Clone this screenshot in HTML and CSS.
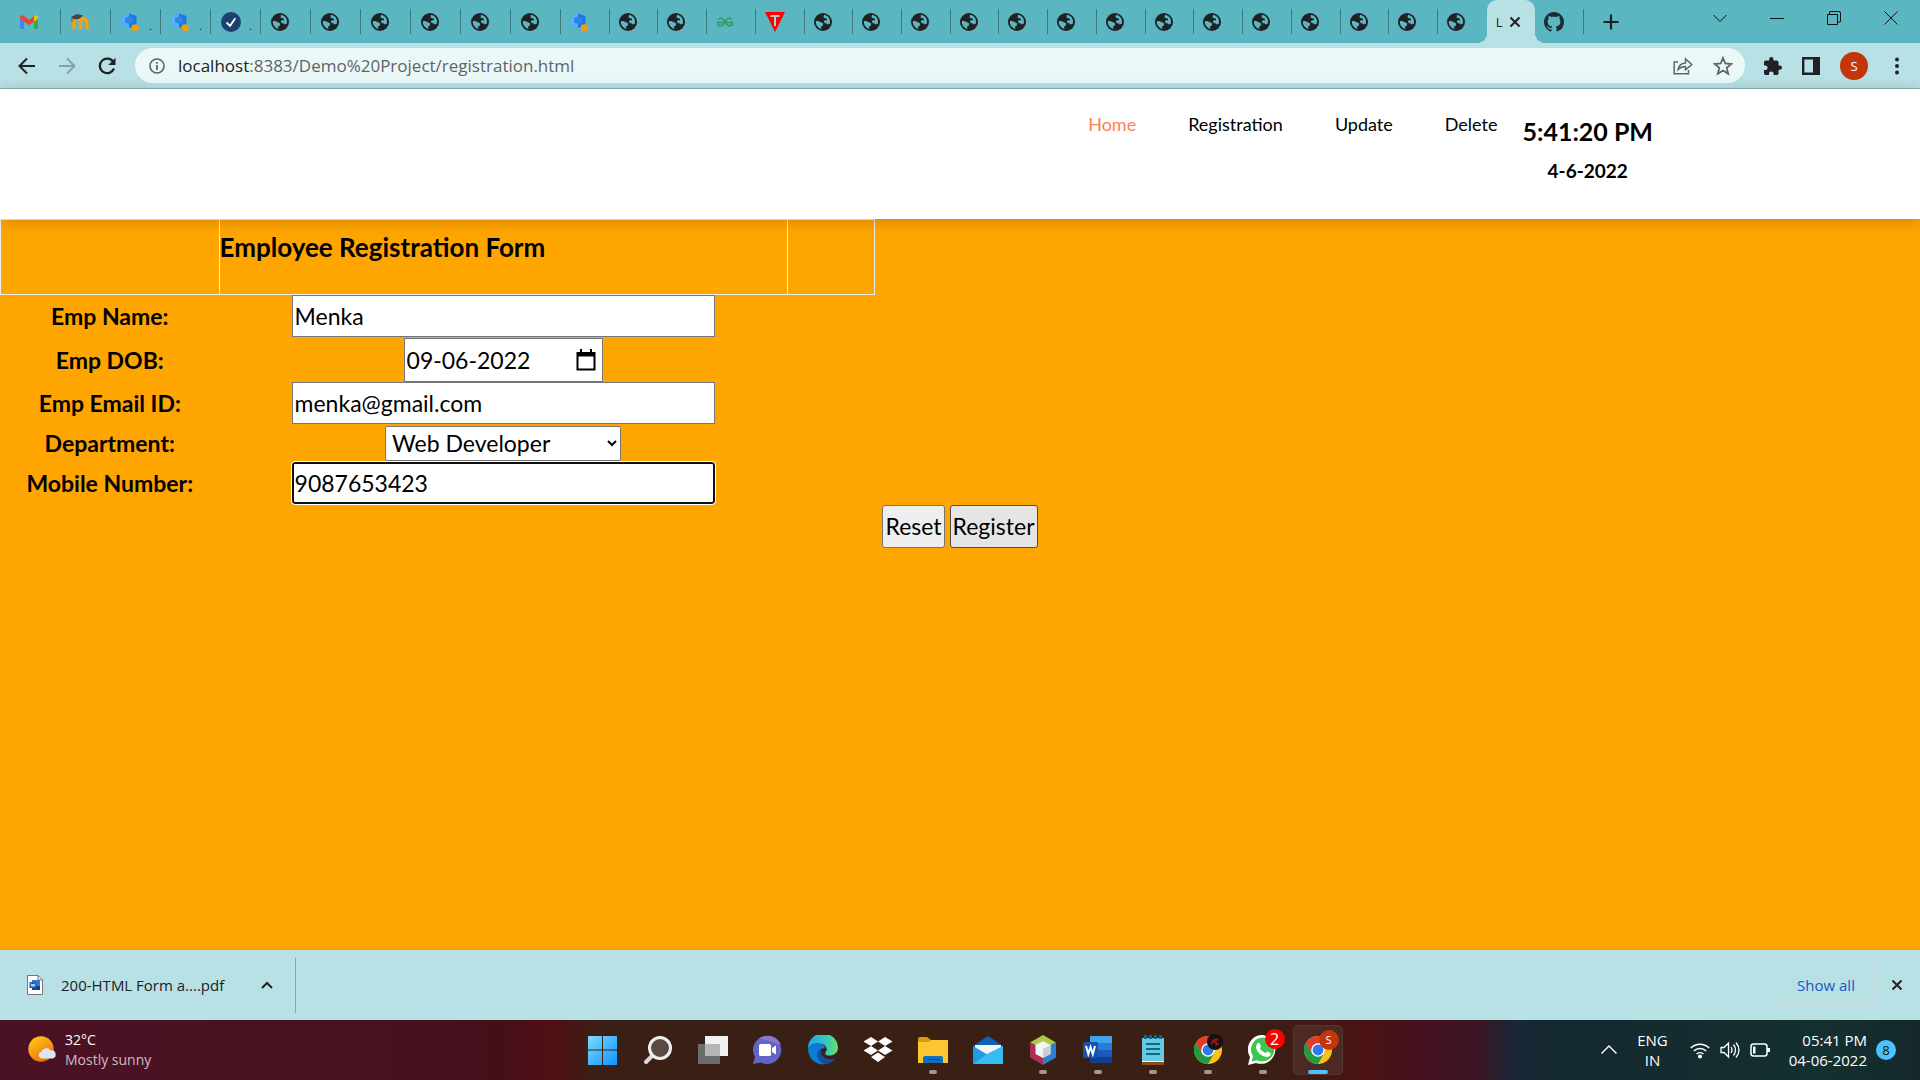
FILE: index.html
```html
<!DOCTYPE html>
<html lang="en">
<head>
<meta charset="utf-8">
<title>Registration</title>
<link rel="stylesheet" href="styles.css">
</head>
<body>
<svg class="defs" aria-hidden="true">
  <symbol id="globe" viewBox="0 0 18 18"><circle cx="9" cy="9" r="9" fill="#202124"/><path d="M10 1.800A7.200 7.200 0 0 1 16 10.500L13.500 11.500 12.500 10.200H10.800L9.800 8.600 11 7.200H13V5.800L11.200 5.300 9.500 4.500Z" fill="#5ab7c1"/><path d="M1.900 8H4L7.200 9.200 9.200 10.500 8.800 12.800 7 13.500 7.500 16A7.200 7.200 0 0 1 1.900 8Z" fill="#5ab7c1"/></symbol>
  <symbol id="cube" viewBox="0 0 18 18"><path d="M1 3.500 8 .5 15.500 3V12L8 15 1 12.500Z" fill="#1a7be0"/><path d="M1 3.500 8 .5V15L1 12.500Z" fill="#55b1fb"/><path d="M4 5 8 3.500 12 5V9.500L8 11 4 9.500Z" fill="#2f86e8"/><rect x="11" y="11.500" width="6.500" height="6.300" rx="1.500" fill="#f90"/></symbol>
  <symbol id="x" viewBox="0 0 12 12"><path d="M1.500 1.500 10.500 10.500M10.500 1.500 1.500 10.500" fill="none" stroke="currentColor" stroke-width="2"/></symbol>
  <symbol id="chrome" viewBox="0 0 28 28"><circle cx="14" cy="14" r="14" fill="#fbc116"/><path d="M14 14 1.900 7A14 14 0 0 1 26.100 7H14Z" fill="#e33b2e"/><path d="M1.900 7A14 14 0 0 0 14 28L20 17.500 14 14 8 17.500Z" fill="#229a47"/><path d="M1.900 7 8 17.500 14 14 14 7Z" fill="#e33b2e"/><path d="M1.900 7A14 14 0 0 0 .5 18L8 17.500Z" fill="#229a47"/><circle cx="14" cy="14" r="6.800" fill="#fff"/><circle cx="14" cy="14" r="5.400" fill="#2e7ceb"/></symbol>
</svg>

<div class="screen">
  <header class="tabstrip">
    <nav class="tabs" aria-label="Tabs">
      <div class="tab first"><svg viewBox="0 0 18 14" class="fav"><path d="M0 2V12.500Q0 14 1.500 14H4V6.500Z" fill="#4285f4"/><path d="M18 2V12.500Q18 14 16.500 14H14V6.500Z" fill="#34a853"/><path d="M0 2.500Q.5-.8 3.500.8L9 5 14.500.8 14 6.500 9 10.200 4 6.500 0 4Z" fill="#ea4335"/><path d="M14 1.200Q17.500-1 18 2.500V4L14 6.800Z" fill="#fbbc04"/></svg></div>
      <div class="tab wide"><svg viewBox="0 0 18 18" class="fav"><path d="M3 16.500V9Q3 6 6 6T9.500 9V16.500M9.500 9Q9.500 6 12.500 6T16 9V16.500" fill="none" stroke="#f7a01b" stroke-width="3.400"/><path d="M0 4 6 1 12 2.500 8 6 3.500 6.500Z" fill="#444"/><path d="M1 4V9" stroke="#555"/></svg></div>
      <div class="tab wide"><svg class="fav"><use href="#cube"/></svg><i class="cut">.</i></div>
      <div class="tab wide"><svg class="fav"><use href="#cube"/></svg><i class="cut">.</i></div>
      <div class="tab wide"><svg viewBox="0 0 20 20" class="fav big"><circle cx="10" cy="10" r="10" fill="#1b416f"/><path d="M5.500 10.500 9 13.800 14.300 6.300" fill="none" stroke="#fff" stroke-width="1.800"/></svg><i class="cut">.</i></div>
      <div class="tab wide"><svg class="fav"><use href="#globe"/></svg></div>
      <div class="tab wide"><svg class="fav"><use href="#globe"/></svg></div>
      <div class="tab wide"><svg class="fav"><use href="#globe"/></svg></div>
      <div class="tab wide"><svg class="fav"><use href="#globe"/></svg></div>
      <div class="tab wide"><svg class="fav"><use href="#globe"/></svg></div>
      <div class="tab wide"><svg class="fav"><use href="#globe"/></svg></div>
      <div class="tab"><svg class="fav"><use href="#cube"/></svg></div>
      <div class="tab"><svg class="fav"><use href="#globe"/></svg></div>
      <div class="tab"><svg class="fav"><use href="#globe"/></svg></div>
      <div class="tab"><svg viewBox="0 0 18 18" class="fav"><path d="M1 9.500H17M2 6.500Q5 4 7.500 6.500 8.500 8 8 10 7 13 4 12.800 1.500 12.500 1.500 9.500M16 6.500Q13 4 10.500 6.500 9.500 8 10 10 11 13 14 12.800 16.500 12.500 16.500 9.500" fill="none" stroke="#2f9a62" stroke-width="1.600"/></svg></div>
      <div class="tab"><svg viewBox="0 0 20 20" class="fav big"><path d="M0 0H20L10 20Z" fill="#f00"/><path d="M5.500 4H14.500M10 4V14" stroke="#bcc" stroke-width="2"/></svg></div>
      <div class="tab"><svg class="fav"><use href="#globe"/></svg></div>
      <div class="tab"><svg class="fav"><use href="#globe"/></svg></div>
      <div class="tab"><svg class="fav"><use href="#globe"/></svg></div>
      <div class="tab"><svg class="fav"><use href="#globe"/></svg></div>
      <div class="tab"><svg class="fav"><use href="#globe"/></svg></div>
      <div class="tab"><svg class="fav"><use href="#globe"/></svg></div>
      <div class="tab"><svg class="fav"><use href="#globe"/></svg></div>
      <div class="tab"><svg class="fav"><use href="#globe"/></svg></div>
      <div class="tab"><svg class="fav"><use href="#globe"/></svg></div>
      <div class="tab"><svg class="fav"><use href="#globe"/></svg></div>
      <div class="tab"><svg class="fav"><use href="#globe"/></svg></div>
      <div class="tab"><svg class="fav"><use href="#globe"/></svg></div>
      <div class="tab"><svg class="fav"><use href="#globe"/></svg></div>
      <div class="tab plain"><svg class="fav"><use href="#globe"/></svg></div>
      <div class="tab active"><span class="tab-title">L</span><button class="icon-btn" aria-label="Close tab"><svg class="x"><use href="#x"/></svg></button></div>
      <div class="tab"><svg viewBox="0 0 16 16" class="fav big"><path fill="#202a35" d="M8 0C3.580 0 0 3.580 0 8c0 3.540 2.290 6.530 5.470 7.590.4.070.55-.17.55-.38 0-.19-.01-.82-.01-1.490-2.010.37-2.530-.49-2.690-.94-.09-.23-.48-.94-.82-1.130-.28-.15-.68-.52-.01-.53.630-.01 1.080.58 1.230.82.720 1.210 1.870.87 2.330.66.070-.52.280-.87.510-1.070-1.780-.2-3.640-.89-3.640-3.950 0-.87.310-1.590.820-2.150-.08-.2-.36-1.020.08-2.120 0 0 .67-.21 2.200.82.640-.18 1.320-.27 2-.27s1.360.09 2 .27c1.530-1.040 2.200-.82 2.200-.82.440 1.100.160 1.920.080 2.120.510.560.820 1.270.820 2.150 0 3.070-1.870 3.750-3.650 3.950.290.250.540.730.540 1.480 0 1.070-.01 1.930-.01 2.200 0 .21.150.460.550.380A8.010 8.010 0 0 0 16 8c0-4.420-3.580-8-8-8Z"/></svg></div>
    </nav>
    <button class="icon-btn new-tab" aria-label="New tab"><svg viewBox="0 0 16 16" class="i16"><path d="M8 .5V15.500M.5 8H15.500" stroke="#202124" stroke-width="2.200"/></svg></button>
    <div class="window-controls">
      <button class="icon-btn" aria-label="Search tabs"><svg viewBox="0 0 14 14" class="i14"><path d="M.5 4 7 10.500 13.500 4"/></svg></button>
      <button class="icon-btn" aria-label="Minimize"><svg viewBox="0 0 14 14" class="i14"><path d="M0 7.500H14"/></svg></button>
      <button class="icon-btn" aria-label="Restore"><svg viewBox="0 0 14 14" class="i14"><path d="M.5 3.500H10.500V13.500H.5ZM2.500 3V1Q2.500.5 3 .5H12Q13.500.5 13.500 2V10.500Q13.500 11 13 11H11"/></svg></button>
      <button class="icon-btn" aria-label="Close"><svg viewBox="0 0 14 14" class="i14"><path d="M.5.5 13.500 13.500M13.500.5.5 13.500"/></svg></button>
    </div>
  </header>

  <div class="toolbar">
    <div class="nav-buttons">
      <button class="icon-btn" aria-label="Back"><svg viewBox="0 0 18 18" class="i18"><path d="M17 9H2M9 1.500 1.500 9 9 16.500" fill="none" stroke="#202124" stroke-width="2"/></svg></button>
      <button class="icon-btn" aria-label="Forward"><svg viewBox="0 0 18 18" class="i18"><path d="M1 9H16M9 1.500 16.500 9 9 16.500" fill="none" stroke="#84a2a6" stroke-width="2"/></svg></button>
      <button class="icon-btn" aria-label="Reload"><svg viewBox="0 0 18 18" class="i18"><path d="M15.500 5.200A7.300 7.300 0 1 0 16 11.500" fill="none" stroke="#202124" stroke-width="2.200"/><path d="M17.500.8V8H10.300Z" fill="#202124"/></svg></button>
    </div>
    <div class="omnibox">
      <svg viewBox="0 0 18 18" class="i16"><circle cx="9" cy="9" r="7.900" fill="none" stroke="#5f6368" stroke-width="1.800"/><path d="M9 8V13.500M9 4.500V6.500" stroke="#5f6368" stroke-width="2"/></svg>
      <div class="url"><b>localhost</b>:8383/Demo%20Project/registration.html</div>
      <button class="icon-btn" aria-label="Share"><svg viewBox="0 0 20 18" class="i20"><path d="M5 5H1.200V16.800H15.500V13M5 12.500Q6 6.500 12.500 6V2L18.800 7.500 12.500 12.800V9.500Q8 9.500 5 12.500Z" fill="none" stroke="#5f6368" stroke-width="1.500"/></svg></button>
      <button class="icon-btn" aria-label="Bookmark"><svg viewBox="0 0 20 20" class="i20"><path d="M10 2 12.300 7.500 18.300 8 13.700 11.900 15.200 17.800 10 14.600 4.800 17.800 6.300 11.900 1.700 8 7.700 7.500Z" fill="none" stroke="#5f6368" stroke-width="1.800"/></svg></button>
    </div>
    <div class="tools">
      <button class="icon-btn" aria-label="Extensions"><svg viewBox="2 1 21 21" class="i18"><path fill="#202124" d="M20.500 11H19V7a2 2 0 0 0-2-2h-4V3.500a2.500 2.500 0 0 0-5 0V5H4a2 2 0 0 0-2 2v3.800h1.500a2.700 2.700 0 0 1 0 5.400H2V20a2 2 0 0 0 2 2h3.800v-1.500a2.700 2.700 0 0 1 5.400 0V22H17a2 2 0 0 0 2-2v-4h1.500a2.500 2.500 0 0 0 0-5Z"/></svg></button>
      <button class="icon-btn" aria-label="Side panel"><svg viewBox="0 0 18 18" class="i18"><path d="M1.200 1.200H16.800V16.800H1.200Z" fill="none" stroke="#202124" stroke-width="2.400"/><path d="M11 1H17V17H11Z" fill="#202124"/></svg></button>
      <button class="icon-btn avatar" aria-label="Profile">S</button>
      <button class="icon-btn" aria-label="Menu"><svg viewBox="0 0 18 18" class="i18"><g fill="#202124"><circle cx="9" cy="2.500" r="2"/><circle cx="9" cy="9" r="2"/><circle cx="9" cy="15.500" r="2"/></g></svg></button>
    </div>
  </div>

  <main class="page">
    <div class="site-header">
      <nav class="menu" aria-label="Site">
        <a href="#home" class="current">Home</a>
        <a href="#registration">Registration</a>
        <a href="#update">Update</a>
        <a href="#delete">Delete</a>
      </nav>
      <div class="clock"><h2>5:41:20 PM</h2><h3>4-6-2022</h3></div>
    </div>
    <form class="form">
      <table>
        <colgroup><col class="c-label"><col class="c-field"><col class="c-end"></colgroup>
        <thead><tr><th></th><th><h1>Employee Registration Form</h1></th><th></th></tr></thead>
        <tbody>
          <tr><td><label for="name">Emp Name:</label></td><td><input class="field" id="name" type="text" value="Menka"></td></tr>
          <tr class="dob"><td><label for="dob">Emp DOB:</label></td><td><span class="date"><input id="dob" type="text" value="09-06-2022"><svg viewBox="0 0 20 22" class="cal"><path d="M1.500 4H18.500V20.500H1.500Z" fill="none" stroke="#000" stroke-width="2"/><path d="M1 3H19V7.500H1ZM4 0H6V4H4ZM14 0H16V4H14Z"/></svg></span></td></tr>
          <tr><td><label for="email">Emp Email ID:</label></td><td><input class="field" id="email" type="email" value="menka@gmail.com"></td></tr>
          <tr class="dept"><td><label for="dept">Department:</label></td><td><select id="dept"><option>Web Developer</option></select></td></tr>
          <tr><td><label for="mobile">Mobile Number:</label></td><td><input class="field focused" id="mobile" type="text" value="9087653423"></td></tr>
        </tbody>
      </table>
      <div class="actions"><button type="reset">Reset</button><button type="submit" class="hover">Register</button></div>
    </form>
  </main>

  <div class="downloads">
    <div class="download">
      <svg viewBox="0 0 16 20" class="doc"><path d="M.5.500H11L15.500 5V19.500H.5Z" fill="#fff" stroke="#777"/><path d="M11 .5V5H15.500" fill="none" stroke="#777"/><rect x="5" y="5" width="8" height="10" fill="#2b7cd3"/><path d="M5 11H13V15H5Z" fill="#103f91"/><rect x="2.500" y="7" width="7" height="6" fill="#185abd"/><path d="M4 8.500 5 11.500 6 9 7 11.500 8 8.500" fill="none" stroke="#fff" stroke-width=".8"/></svg>
      <span>200-HTML Form a....pdf</span>
      <button class="icon-btn" aria-label="More"><svg viewBox="0 0 12 8" class="x"><path d="M1 7 6 2 11 7" fill="none" stroke="#202124" stroke-width="2"/></svg></button>
    </div>
    <button class="show-all">Show all</button>
    <button class="icon-btn" aria-label="Close downloads"><svg class="x"><use href="#x"/></svg></button>
  </div>

  <footer class="taskbar">
    <div class="weather">
      <svg viewBox="0 0 28 28" class="sun"><defs><linearGradient id="sg" x1="0" y1="0" x2=".6" y2="1"><stop offset="0" stop-color="#ffd31a"/><stop offset="1" stop-color="#f07008"/></linearGradient></defs><circle cx="13" cy="13" r="12.700" fill="url(#sg)"/><path d="M13 22.500A3.700 3.700 0 0 1 13.500 15.500 5 5 0 0 1 22.500 14.500 4 4 0 0 1 24.500 22.500Z" fill="#dbe6f7"/></svg>
      <div>32°C<br><span>Mostly sunny</span></div>
    </div>
    <div class="apps">
      <button class="app" aria-label="Start"><svg viewBox="0 0 30 30"><defs><linearGradient id="wg" x1="0" y1="0" x2="1" y2="1"><stop offset="0" stop-color="#7adcff"/><stop offset="1" stop-color="#1292fb"/></linearGradient></defs><path d="M0 1H14V14.500H0ZM15 1H29V14.500H15ZM0 15.500H14V30H0ZM15 15.500H29V30H15Z" fill="url(#wg)"/></svg></button>
      <button class="app" aria-label="Search"><svg viewBox="0 0 30 30"><path d="M11 19 3 27" stroke="#d5d9dc" stroke-width="4" stroke-linecap="round"/><circle cx="17" cy="13" r="10.500" fill="#5a4a42" stroke="#eef0f2" stroke-width="3"/></svg></button>
      <button class="app" aria-label="Task view"><svg viewBox="0 0 30 30"><path d="M7 1H30V21H7Z" fill="#f1f1f1"/><path d="M0 9H22V29H0Z" fill="#6c6c6c"/><path d="M7 9H22V21H7Z" fill="#b5b5b5"/></svg></button>
      <button class="app" aria-label="Chat"><svg viewBox="0 0 30 30"><path d="M15 1A14 14 0 1 1 8 27.500L0 29 2 22A14 14 0 0 1 15 1Z" fill="#6264c7"/><path d="M6 3.800A14 14 0 0 1 28 10Q17 5 6 3.800Z" fill="#8b78cd"/><rect x="6" y="9" width="12" height="12" rx="1.500" fill="#fff"/><path d="M19 13 23 10.500V19.500L19 17Z" fill="#fff"/></svg></button>
      <button class="app" aria-label="Edge"><svg viewBox="0 0 30 30"><defs><linearGradient id="eg" x1="0" x2="1"><stop offset="0" stop-color="#23a6e8"/><stop offset=".6" stop-color="#35c8c0"/><stop offset="1" stop-color="#6be05a"/></linearGradient></defs><path d="M0 14A15 15 0 0 1 30 12.500C30 18 26 20.500 21.500 20.500S16.500 18 18 16.500C20 14 18 9 11 8.500 5 8.200 1 11 0 14Z" fill="url(#eg)"/><path d="M0 15C1 9 6 7.500 11 8.500 16 9.500 17 12 17 13 12 13 9 18 11 23S20 28.500 26 24.500A15 15 0 0 1 0 15Z" fill="#0c7bd6"/><path d="M13 13.500C8 16 8 24 14 28 18 30.500 24 28.500 27.500 23 20 26.500 12 22 13 13.500Z" fill="#114e9c"/></svg></button>
      <button class="app" aria-label="Dropbox"><svg viewBox="0 0 30 30"><path d="M8 2 15 6.500 8 11 0.500 6.500ZM22 2 29.500 6.500 22 11 15 6.500ZM8 11 15 15.500 8 20 .5 15.500ZM22 11 29.500 15.500 22 20 15 15.500ZM15 17.500 22 22 15 27 8 22Z" fill="#fff"/></svg></button>
      <button class="app running" aria-label="Explorer"><svg viewBox="0 0 30 30"><path d="M0 4Q0 2 2 2H9L13 5V12H0Z" fill="#dd9a0a"/><path d="M0 7H11L13 5H30V28H0Z" fill="#fdc52f"/><path d="M5 28V23Q5 21 7 21H23Q25 21 25 23V28Z" fill="#0f6fc0"/><path d="M9 24.500H22" stroke="#0a4a94" stroke-width="1.200"/></svg></button>
      <button class="app" aria-label="Mail"><svg viewBox="0 0 30 30"><path d="M0 11 15 1 30 11V20H0Z" fill="#0f62b4"/><path d="M2 10H28V20H2Z" fill="#f4f4f6"/><path d="M0 11 15 20 0 29Z" fill="#1c9be6"/><path d="M30 11V29H0L15 18.500Z" fill="#35bdf3"/></svg></button>
      <button class="app running" aria-label="NetBeans"><svg viewBox="0 0 30 30"><path d="M15 0 28 7.500 21 11 15 8 9 11 2 7.500Z" fill="#adc84c"/><path d="M2 7.500 9 11V18.500L15 22V30L2 22.500Z" fill="#ad2d55"/><path d="M28 7.500V22.500L15 30V22L21 18.500V11Z" fill="#2f7fd0"/><path d="M15 6 22.500 10V19L15 23 7.500 19V10Z" fill="#f3f5ee"/><path d="M15 14 22.500 10V19L15 23Z" fill="#c4d0dc"/></svg></button>
      <button class="app running" aria-label="Word"><svg viewBox="0 0 30 30"><path d="M7 1H29V8H7Z" fill="#41a5ee"/><path d="M7 8H29V15H7Z" fill="#2b7cd3"/><path d="M7 15H29V22H7Z" fill="#185abd"/><path d="M7 22H29V28H7Z" fill="#103f91"/><rect y="7" width="15" height="16" rx="1.500" fill="#1553ae"/><path d="M3 11 5.300 19 7.500 12 9.800 19 12 11" fill="none" stroke="#fff" stroke-width="2"/></svg></button>
      <button class="app running" aria-label="Notepad"><svg viewBox="0 0 30 30"><path d="M4 25H26V30H4Z" fill="#8a4d19"/><path d="M4 3H26V27H4Z" fill="#eef6f8"/><path d="M4 3H26V26H4Z" fill="#66cbe0"/><path d="M8 9H22M8 14H22M8 19H22" stroke="#086a8c" stroke-width="1.800"/><path d="M7.500 0V4M12.500 0V4M17.500 0V4M22.500 0V4" stroke="#0b6a88" stroke-width="3"/></svg></button>
      <button class="app running" aria-label="Chrome"><svg viewBox="0 0 30 30"><use href="#chrome" x="1" y="1" width="28" height="28"/></svg><span class="mark dark"><svg viewBox="0 0 14 14"><path d="M2 9Q3 3 10 3L12 5 7 6 12 9 8 12 7 8 4 8 3 11Z" fill="#a01518"/></svg></span></button>
      <button class="app running" aria-label="WhatsApp"><svg viewBox="0 0 30 30"><path d="M15 0A14.500 14.500 0 1 1 8 28L0 30 2 22A14.500 14.500 0 0 1 15 0Z" fill="#fff"/><path d="M15 2.500A12 12 0 1 1 9 25.300L3.500 26.500 5 21A12 12 0 0 1 15 2.500Z" fill="#3cc551"/><path d="M9 9Q11 6.500 12 9L13 11.500 12 13.500Q14 17 17.500 18L19.500 16.500 22.500 18Q23 22 18.500 22 9.500 20 8 12.500Q8 10 9 9Z" fill="#fff"/></svg><span class="count">2</span></button>
      <button class="app running current" aria-label="Chrome"><svg viewBox="0 0 30 30"><use href="#chrome" x="1" y="1" width="28" height="28"/></svg><span class="mark">S</span></button>
    </div>
    <div class="tray">
      <svg viewBox="0 0 16 16" class="i16"><path d="M.5 11.500 8 4 15.500 11.500" fill="none" stroke="#fff" stroke-width="1.400"/></svg>
      <div class="lang">ENG<br>IN</div>
      <div class="status">
        <svg viewBox="0 0 20 18" class="i20"><g fill="none" stroke="#fff" stroke-width="1.500"><path d="M.8 7A13 13 0 0 1 19.200 7M3.800 10A9 9 0 0 1 16.200 10M6.600 13A5 5 0 0 1 13.400 13"/></g><circle cx="10" cy="15.500" r="2" fill="#fff"/></svg>
        <svg viewBox="0 0 20 18" class="i20"><path d="M1 6.500H4L8.500 2V16L4 11.500H1ZM11 6Q13 9 11 12M13.500 3.500Q17.500 9 13.500 14.500M16 1.500Q22 9 16 16.500" fill="none" stroke="#fff" stroke-width="1.300"/></svg>
        <svg viewBox="0 0 20 18" class="i20"><rect x="1" y="3" width="16" height="12" rx="2.500" fill="none" stroke="#fff" stroke-width="1.500"/><path d="M3 5.500H5.500V12.500H3ZM17 7H20V11H17Z" fill="#fff"/></svg>
      </div>
      <div class="time">05:41 PM<br>04-06-2022</div>
      <span class="badge">8</span>
    </div>
  </footer>
</div>
</body>
</html>
```
FILE: styles.css
```css
* { box-sizing: border-box; }
body { margin: 0; font-family: "Open Sans", "Noto Sans", sans-serif; color: #202124; }
button, input, select { font: inherit; color: inherit; margin: 0; }
svg { display: block; flex: none; }
.defs { position: absolute; width: 0; height: 0; }
.screen { display: flex; flex-direction: column; min-height: 100vh; }
.icon-btn { display: flex; align-items: center; justify-content: center; padding: 0; border: 0; background: none; }
.i14 { width: 14px; height: 14px; fill: none; stroke: #111; }
.i16 { width: 16px; height: 16px; }
.i18 { width: 18px; height: 18px; }
.i20 { width: 20px; height: 20px; }
.x { width: 12px; height: 12px; }

/* Tab strip */
.tabstrip { display: flex; height: 43px; background: #5ab7c1; }
.tabs { display: flex; width: 82.5%; }
.tab { position: relative; display: flex; flex: 1 1 0; min-width: 0; align-items: center; padding-left: 9px; }
.tab.wide { flex: 0 0 50px; padding-left: 10px; }
.tab.first { flex: 0 0 61px; padding-left: 20px; }
.tab::after { content: ""; position: absolute; right: 0; top: 9px; width: 1px; height: 25px; background: #3b7880; }
.tab.plain::after { display: none; }
.fav { width: 18px; height: 18px; }
.fav.big { width: 20px; height: 20px; }
.cut { margin-left: auto; padding: 8px 9px 0 0; font-size: 10px; font-style: normal; line-height: 1; }
.tab.active { background: #b8e1e5; border-radius: 10px 10px 0 0; gap: 7px; }
.tab.active::before, .tab.active::after { content: ""; position: absolute; top: auto; bottom: 0; width: 10px; height: 10px; }
.tab.active::before { left: -10px; background: radial-gradient(circle at 0 0, transparent 10px, #b8e1e5 10px); }
.tab.active::after { right: -10px; background: radial-gradient(circle at 100% 0, transparent 10px, #b8e1e5 10px); }
.tab-title { font-size: 13px; }
.new-tab { width: 54px; }
.window-controls { display: grid; grid-template-columns: repeat(4, 57px); margin-left: auto; height: 36px; padding-right: 1px; }

/* Toolbar */
.toolbar { display: flex; align-items: center; height: 46px; background: #b8e1e5; border-bottom: 1px solid #8fb3b8; }
.nav-buttons { display: flex; width: 135px; gap: 22px; padding-left: 18px; }
.omnibox { display: flex; flex: 1; align-items: center; gap: 20px; height: 35px; padding: 0 12px 0 14px; border-radius: 18px; background: #ebf8f8; }
.url { flex: 1; margin-left: -7px; color: #5f6368; font-size: 17px; white-space: nowrap; }
.url b { font-weight: 400; color: #202124; }
.tools { display: flex; align-items: center; width: 175px; gap: 20px; padding-left: 19px; }
.avatar { width: 28px; height: 28px; border-radius: 50%; background: #c3360c; color: #fff; font-size: 13px; }

/* Web page */
.page { flex: 1; background: orange; color: #000; font-family: Lato, "Open Sans", sans-serif; }
.site-header { position: relative; display: flex; justify-content: flex-end; height: 130px; padding-right: 267px; background: #fff; box-shadow: 0 2px 14px rgba(0, 0, 0, .2); }
.menu { display: flex; gap: 52px; padding: 23px 25px 0 0; font-size: 18px; line-height: 24px; }
.menu a { color: #000; text-decoration: none; }
.menu a.current { color: coral; }
.clock { padding-top: 24px; text-align: center; }
.clock h2 { margin: 0; font-size: 25px; line-height: 36px; }
.clock h3 { margin: 0; padding-top: 8px; font-size: 19px; line-height: 28px; }
.form { font-size: 23px; }
table { width: 875px; border-collapse: collapse; table-layout: fixed; }
.c-label { width: 25%; }
.c-field { width: 65%; }
.c-end { width: 10%; }
thead th { height: 75px; padding: 0; border: 1px solid #eee; vertical-align: top; text-align: left; }
h1 { margin: 0; padding-top: 7px; font-size: 26px; line-height: 40px; }
td { height: 43px; padding: 0; text-align: center; vertical-align: middle; line-height: 30px; }
.dob td { height: 44px; }
.dept td { height: 37px; }
label { font-weight: 700; }
.field, .date, select, .actions button { border: 1px solid #767676; background: #fff; }
.field { display: block; width: 423px; height: 42px; margin: 0 auto; padding: 0 2px; }
.field.focused { padding: 0 1px; border: 2px solid #101010; border-radius: 3px; outline: 1px solid #fff; }
.date { display: flex; align-items: center; justify-content: space-between; width: 199px; height: 44px; margin: 0 auto; padding: 0 6px 0 2px; }
.date input { width: 140px; padding: 0; border: 0; background: none; }
.cal { width: 20px; height: 22px; }
select { display: block; width: 236px; height: 35px; margin: 0 auto; padding: 0 2px; border-radius: 2px; }
.actions { display: flex; justify-content: center; gap: 5px; }
.actions button { height: 43px; padding: 0 2px; border-radius: 3px; background: #efefef; }
.actions .hover { background: #e5e5e5; border-color: #4f4f4f; }

/* Downloads shelf */
.downloads { display: flex; align-items: center; height: 71px; padding-right: 17px; background: #b8e1e5; border-top: 1px solid #8fb3b8; font-size: 15px; }
.download { display: flex; align-items: center; width: 296px; height: 55px; padding: 0 22px 0 27px; border-right: 1px solid #86a6aa; }
.download span { margin: 0 auto 0 18px; }
.doc { width: 16px; height: 20px; }
.show-all { width: 98px; height: 40px; margin: 0 16px 0 auto; padding: 0; border: 1px solid #d6dadd; border-radius: 5px; background: none; color: #1a56c4; font-size: 15px; }

/* Taskbar */
.taskbar { display: grid; grid-template-columns: 1fr auto 1fr; align-items: center; height: 60px; color: #fff; font-size: 14px; line-height: 20px;
  background: linear-gradient(90deg, #4b1224 0%, #49111f 20%, #450f1a 26%, #501012 29%, #3a1f14 31%, #3a1f14 66%, #4b1312 71%, #45101f 74%, #3c1524 77%, #172838 79%, #14282f 81%, #14302f 95%, #14282c 100%); }
.weather { display: flex; align-items: center; gap: 9px; padding-left: 28px; }
.weather span { color: #cdbcc2; }
.sun { width: 28px; height: 28px; }
.apps { display: flex; gap: 5px; }
.app { position: relative; display: grid; place-items: center; width: 50px; height: 50px; padding: 0; border: 0; border-radius: 5px; background: none; color: #fff; }
.app > svg { width: 30px; height: 30px; }
.app.running::after { content: ""; position: absolute; bottom: 1px; left: 21px; width: 8px; height: 4px; border-radius: 2px; background: #a39995; }
.app.current { background: #4b2925; border: 1px solid #573733; }
.app.current::after { left: 14px; bottom: 0; width: 20px; background: #4cc2ff; }
.mark, .count { position: absolute; top: 4px; right: 3px; display: grid; place-items: center; width: 20px; height: 20px; border-radius: 50%; background: #c3360c; font-size: 11px; }
.mark.dark { top: 9px; right: 10px; width: 16px; height: 16px; background: #161214; }
.mark svg { width: 12px; height: 12px; }
.count { background: #f00; font-size: 16px; }
.tray { display: flex; align-items: center; justify-content: flex-end; padding-right: 24px; font-size: 15px; }
.lang { margin: 0 22px 0 20px; text-align: center; }
.status { display: flex; gap: 10px; margin-right: 19px; }
.time { margin-right: 9px; text-align: right; }
.badge { display: grid; place-items: center; width: 20px; height: 20px; border-radius: 50%; background: #4cc2ff; color: #111; font-size: 13px; }
```
